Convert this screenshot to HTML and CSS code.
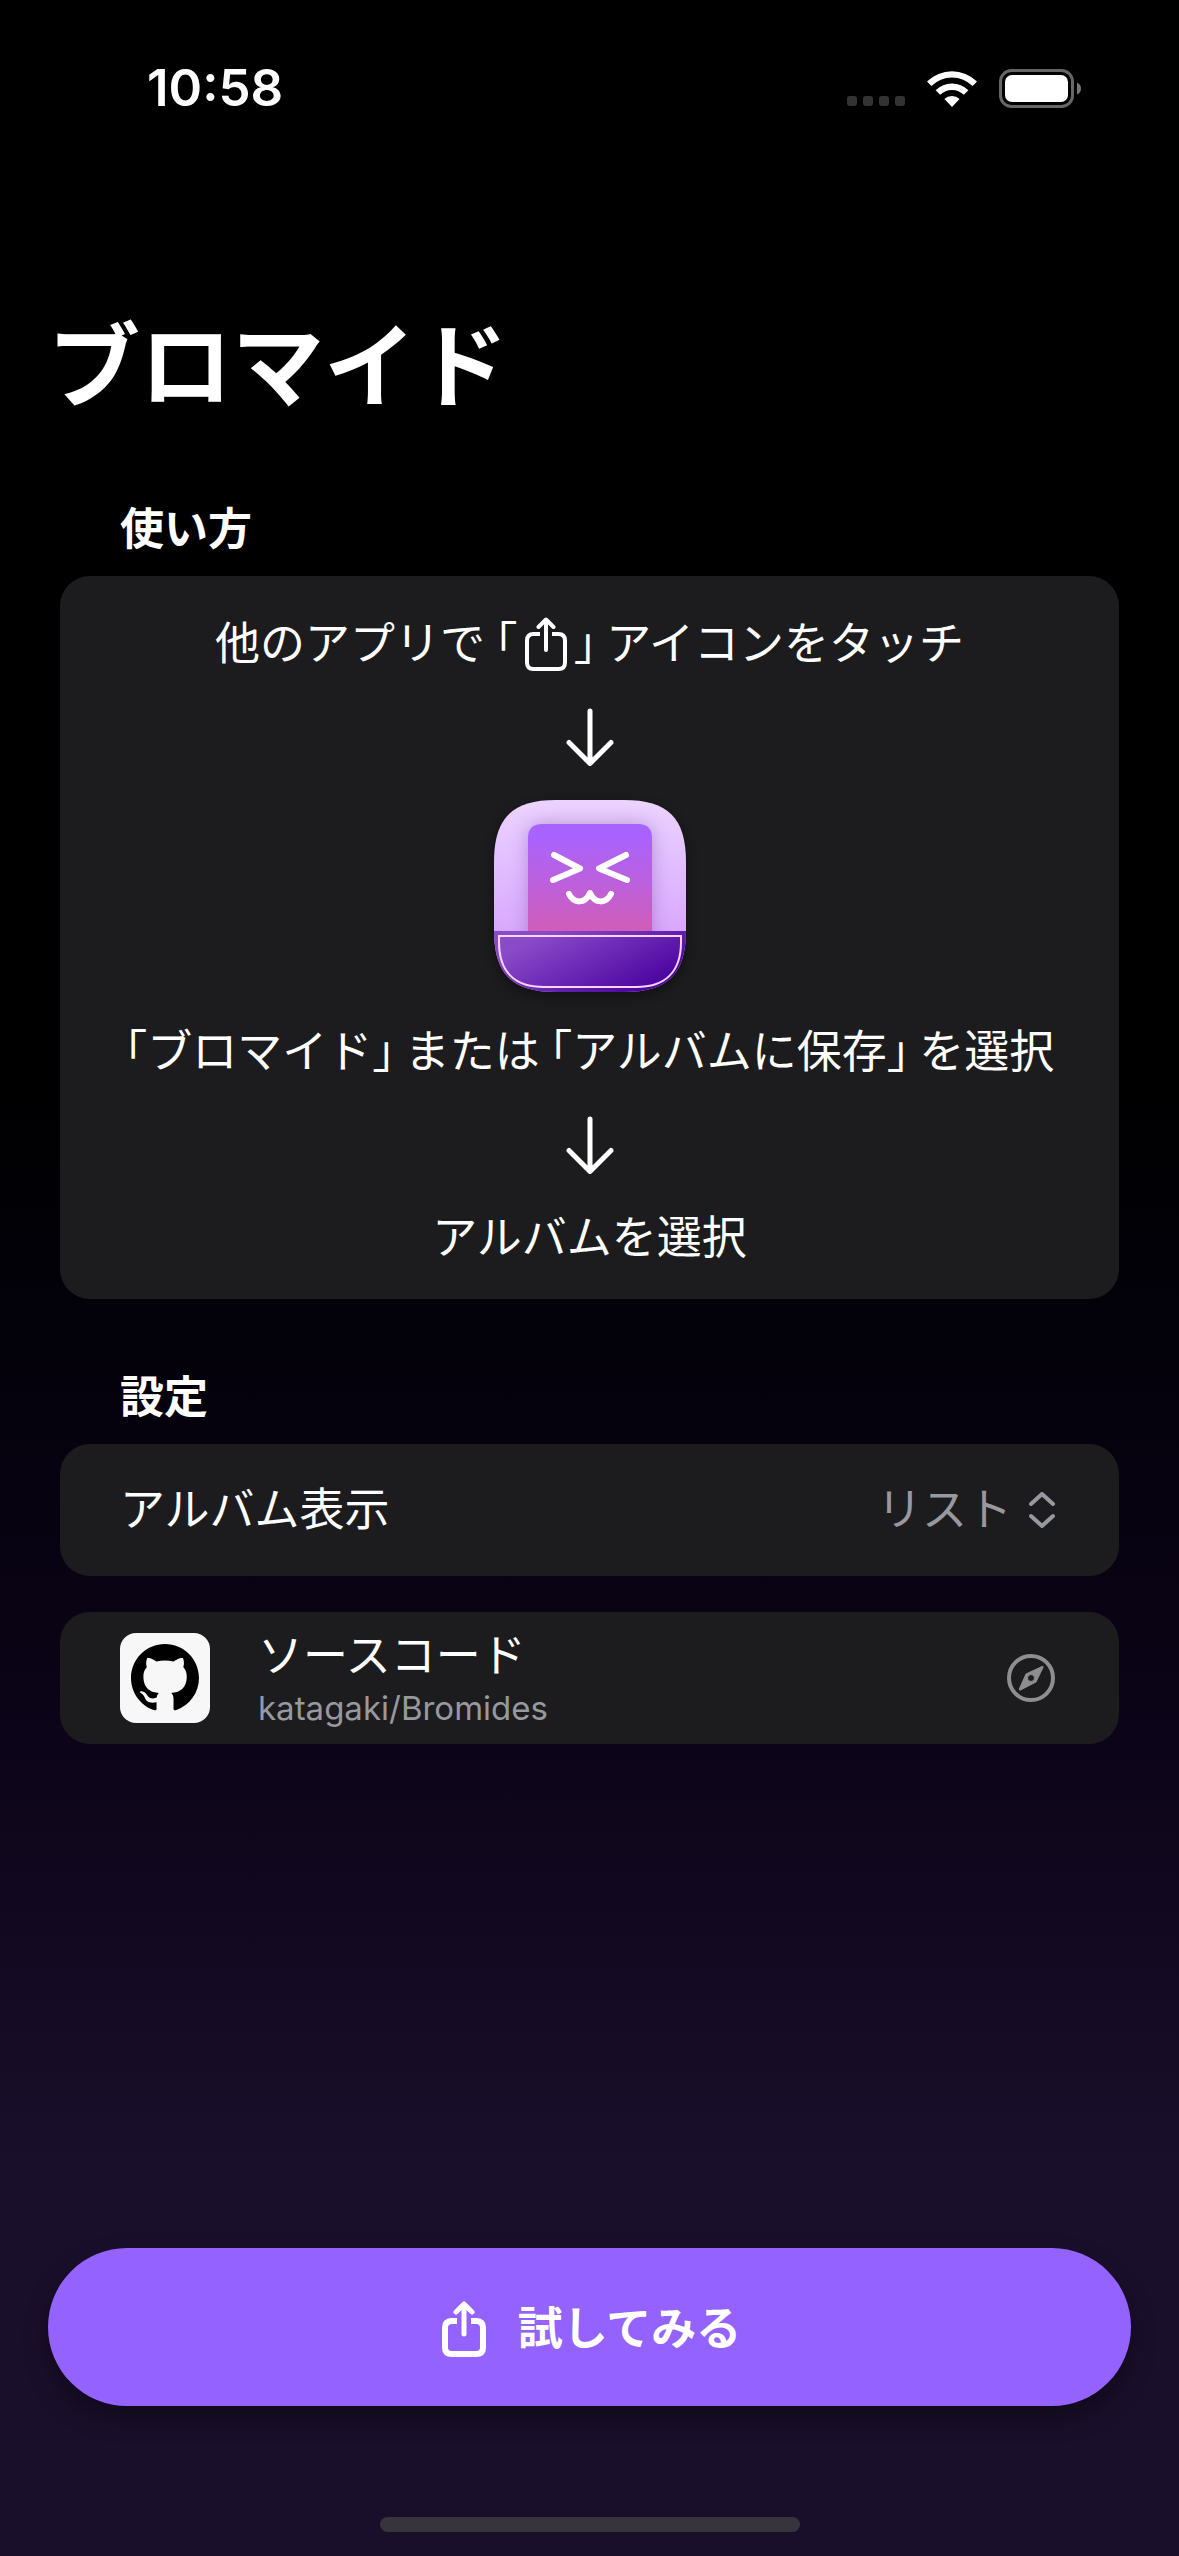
FILE: index.html
```html
<!DOCTYPE html>
<html lang="ja">
<head>
<meta charset="utf-8">
<meta name="viewport" content="width=device-width, initial-scale=1">
<title>ブロマイド</title>
<link rel="stylesheet" href="styles.css">
</head>
<body>
<div class="screen">
  <header class="status">
    <time class="clock">10:58</time>
    <div class="status-icons">
      <span class="signal"><i></i><i></i><i></i><i></i></span>
      <svg class="wifi" viewBox="0 0 50 37" aria-hidden="true">
        <path fill="#fff" d="M0 11.5A35.5 35.5 0 0 1 50 11.5L45.6 16A29.2 29.2 0 0 0 4.4 16ZM8.6 20.2A23.4 23.4 0 0 1 41.4 20.2L36.8 24.8A17 17 0 0 0 13.2 24.8ZM17.4 29A11 11 0 0 1 32.6 29L25 37Z"/>
      </svg>
      <svg class="battery" viewBox="0 0 82 39" aria-hidden="true">
        <rect x="1.5" y="1.5" width="72" height="36" rx="11" fill="none" stroke="#666" stroke-width="3"/>
        <rect x="6" y="6" width="63" height="27" rx="7" fill="#fff"/>
        <path d="M78 13.5Q82 15.5 82 19.5T78 25.500Z" fill="#777"/>
      </svg>
    </div>
  </header>

  <main class="content">
    <h1 class="title">ブロマイド</h1>

    <section>
      <h2 class="heading">使い方</h2>
      <div class="card guide">
        <p class="step">他のアプリで<span class="open">「</span><svg class="share-inline" viewBox="0 0 42 54" fill="none" stroke="#fff" stroke-width="4" stroke-linecap="round" stroke-linejoin="round" role="img" aria-label="共有"><path stroke-linecap="butt" d="M15 17H8.500Q2 17 2 23.500V45.500Q2 52 8.500 52H33.500Q40 52 40 45.500V23.500Q40 17 33.500 17H27"/><path d="M21 33V3M13.500 10L21 2.500L28.500 10"/></svg><span class="close">」</span>アイコンをタッチ</p>
        <svg class="arrow" viewBox="0 0 48 58" aria-hidden="true"><path d="M24 3V55M3 34.500L24 55.500L45 34.500"/></svg>
        <svg class="app-icon" viewBox="0 0 192 192" aria-hidden="true">
          <defs>
            <linearGradient id="back" x1="0" y1="0" x2="0" y2="1"><stop offset="0" stop-color="#ebd3ff"/><stop offset=".7" stop-color="#d8a7ff"/></linearGradient>
            <linearGradient id="photo" x1="0" y1="0" x2="0" y2="1"><stop offset=".1" stop-color="#a863ff"/><stop offset="1" stop-color="#d05db9"/></linearGradient>
            <linearGradient id="pocket" x1="0" y1="0" x2="1" y2=".6"><stop offset=".2" stop-color="#8a4bc9"/><stop offset="1" stop-color="#4c05a0"/></linearGradient>
            <filter id="soft" x="-30%" y="-30%" width="160%" height="160%"><feGaussianBlur stdDeviation="9"/></filter>
            <clipPath id="tile"><path d="M0 62C0 18 18 0 62 0H130C174 0 192 18 192 62V130C192 174 174 192 130 192H62C18 192 0 174 0 130Z"/></clipPath>
          </defs>
          <g clip-path="url(#tile)">
            <rect width="192" height="192" fill="url(#back)"/>
            <rect x="34" y="24" width="124" height="140" rx="14" fill="#704090" opacity=".4" filter="url(#soft)"/>
            <path d="M34 131V38Q34 24 48 24H144Q158 24 158 38V131Z" fill="url(#photo)"/>
            <rect y="131" width="192" height="61" fill="url(#pocket)"/>
          </g>
          <path d="M5 136H187V142C187 172 171 187 142 187H50C21 187 5 172 5 142Z" fill="none" stroke="#f7d5ff" stroke-width="2"/>
          <g fill="none" stroke="#fff" stroke-width="6" stroke-linecap="round" stroke-linejoin="round"><path d="M60 55L86 68.500L59 80M132 55L105 68.500L133 80M75 94C80 104 91 104 96 93C101 104 112 104 117 94"/></g>
        </svg>
        <p class="step"><span class="open first">「</span>ブロマイド<span class="close">」</span>または<span class="open">「</span>アルバムに保存<span class="close">」</span>を選択</p>
        <svg class="arrow" viewBox="0 0 48 58" aria-hidden="true"><path d="M24 3V55M3 34.500L24 55.500L45 34.500"/></svg>
        <p class="step">アルバムを選択</p>
      </div>
    </section>

    <section>
      <h2 class="heading">設定</h2>
      <div class="card row">
        <label for="album-view">アルバム表示</label>
        <span class="picker">
          <select id="album-view"><option>リスト</option></select>
          <svg class="chevrons" viewBox="0 0 26 36" aria-hidden="true"><path d="M2 12L13 2L24 12M2 24L13 34L24 24"/></svg>
        </span>
      </div>
      <a class="card row link" href="https://github.com/katagaki/Bromides">
        <svg class="github" viewBox="0 0 90 90" aria-hidden="true">
          <rect width="90" height="90" rx="16" fill="#f7f7f7"/>
          <g transform="translate(11 11) scale(4.25)"><path d="M8 0C3.580 0 0 3.580 0 8c0 3.540 2.290 6.530 5.470 7.590.400.070.550-.170.550-.380 0-.190-.010-.820-.010-1.490-2.010.370-2.530-.490-2.690-.940-.090-.230-.480-.940-.820-1.130-.280-.150-.680-.520-.010-.530.630-.010 1.080.580 1.230.820.720 1.210 1.870.870 2.330.660.070-.520.280-.870.510-1.070-1.780-.200-3.640-.890-3.640-3.950 0-.870.310-1.590.820-2.150-.080-.200-.360-1.020.080-2.120 0 0 .670-.210 2.200.820.640-.180 1.320-.270 2-.270s1.360.090 2 .270c1.530-1.040 2.200-.820 2.200-.820.440 1.100.160 1.920.080 2.120.510.560.820 1.270.820 2.150 0 3.070-1.870 3.750-3.650 3.950.290.250.540.730.540 1.480 0 1.070-.010 1.930-.010 2.200 0 .210.150.460.550.380A8.010 8.010 0 0 0 16 8c0-4.420-3.580-8-8-8Z"/></g>
        </svg>
        <span class="link-text"><span class="link-title">ソースコード</span><span class="link-sub">katagaki/Bromides</span></span>
        <svg class="compass" viewBox="0 0 48 48" aria-hidden="true">
          <circle cx="24" cy="24" r="22" fill="none" stroke="#8e8e8e" stroke-width="4"/>
          <path fill="#8e8e8e" stroke="#8e8e8e" stroke-linejoin="round" fill-rule="evenodd" d="M35 12.500Q36.500 12 36 13.500L29 28L13.500 36Q12 36.500 12.300 35L19 20ZM24 20.500A3.500 3.500 0 1 0 24 27.500A3.500 3.500 0 0 0 24 20.500Z"/>
        </svg>
      </a>
    </section>
  </main>

  <footer class="footer">
    <button class="try" type="button">
      <svg class="share" viewBox="0 0 44 56" fill="none" stroke="#fff" stroke-width="6" stroke-linecap="round" stroke-linejoin="round" aria-hidden="true"><path stroke-linecap="butt" d="M15 20H10Q3 20 3 26.500V46.500Q3 53 10 53H34Q41 53 41 46.500V26.500Q41 20 34 20H29"/><path stroke-width="5" d="M22 33V4M14 11L22 3L30 11"/></svg>
      試してみる
    </button>
    <div class="home-bar"></div>
  </footer>
</div>
</body>
</html>
```
FILE: styles.css
```css
* {
  box-sizing: border-box;
}

body {
  margin: 0;
  background: #000;
  color: #fff;
  font-family: "Inter", "Noto Sans CJK JP", sans-serif;
  font-size: 45px;
  line-height: 60px;
}

h1,
h2,
p {
  margin: 0;
}

svg {
  display: block;
  flex: none;
}

.screen {
  display: flex;
  flex-direction: column;
  min-height: 100vh;
  background: linear-gradient(#000 0%, #000 42%, #03010a 52%, #0c0418 68%, #1a0f2b 85%, #1a0f2b 100%);
}

.status {
  display: flex;
  align-items: center;
  justify-content: space-between;
  padding: 58px 98px 0 147px;
}

.clock {
  font-size: 51px;
  font-weight: 600;
}

.status-icons {
  display: flex;
  align-items: center;
  gap: 22px;
}

.signal {
  display: flex;
  gap: 6px;
  align-self: flex-end;
  margin-bottom: 2px;
}

.signal i {
  width: 10px;
  height: 10px;
  border-radius: 3px;
  background: #333;
}

.wifi {
  width: 50px;
  height: 37px;
}

.battery {
  width: 82px;
  height: 39px;
}

.content {
  padding: 185px 60px 0;
}

.title {
  margin: 0 -12px;
  font-size: 92px;
  font-weight: 700;
  line-height: 128px;
}

.heading {
  padding: 68px 60px 17px;
  font-size: 44px;
  font-weight: 700;
}

.card {
  border-radius: 30px;
  background: #1c1c1e;
}

.guide {
  display: flex;
  flex-direction: column;
  align-items: center;
  gap: 30px;
  padding: 38px 24px 31px;
}

.step {
  display: flex;
  align-items: center;
}

.open,
.close {
  font-feature-settings: "halt";
}

.open {
  margin-left: 10px;
}

.close {
  margin-right: 10px;
}

.open.first {
  margin-left: 0;
}

.share-inline {
  width: 42px;
  height: 54px;
  margin: 0 7px;
}

.arrow {
  width: 48px;
  height: 66px;
  padding: 4px 0;
  fill: none;
  stroke: #fff;
  stroke-width: 5px;
  stroke-linecap: round;
  stroke-linejoin: round;
}

.app-icon {
  width: 192px;
  height: 192px;
  filter: drop-shadow(0 4px 6px #0006);
}

.row {
  display: flex;
  align-items: center;
  justify-content: space-between;
  min-height: 132px;
  padding: 0 64px 0 60px;
}

.picker {
  display: flex;
  align-items: center;
  gap: 16px;
  color: #98989f;
}

.picker select {
  padding: 0;
  border: 0;
  appearance: none;
  background: none;
  color: inherit;
  font: inherit;
}

.chevrons {
  width: 26px;
  height: 36px;
  fill: none;
  stroke: #98989f;
  stroke-width: 4px;
  stroke-linecap: round;
  stroke-linejoin: round;
}

.link {
  gap: 48px;
  margin-top: 36px;
  color: inherit;
  text-decoration: none;
}

.github {
  width: 90px;
  height: 90px;
}

.link-text {
  display: flex;
  flex: 1;
  flex-direction: column;
}

.link-title {
  line-height: 60px;
}

.link-sub {
  color: #98989f;
  font-size: 33px;
  line-height: 44px;
}

.compass {
  width: 48px;
  height: 48px;
}

.footer {
  display: flex;
  flex-direction: column;
  align-items: center;
  margin-top: auto;
  padding: 48px 48px 24px;
}

.try {
  display: flex;
  align-items: center;
  justify-content: center;
  gap: 32px;
  width: 100%;
  height: 158px;
  margin-bottom: 111px;
  padding: 4px 0 0 4px;
  border: 0;
  border-radius: 79px;
  background: #9362ff;
  box-shadow: 0 12px 24px #0006;
  color: #fff;
  font: inherit;
  font-weight: 700;
}

.share {
  width: 44px;
  height: 56px;
}

.home-bar {
  width: 420px;
  height: 15px;
  border-radius: 8px;
  background: #38343e;
}
```
